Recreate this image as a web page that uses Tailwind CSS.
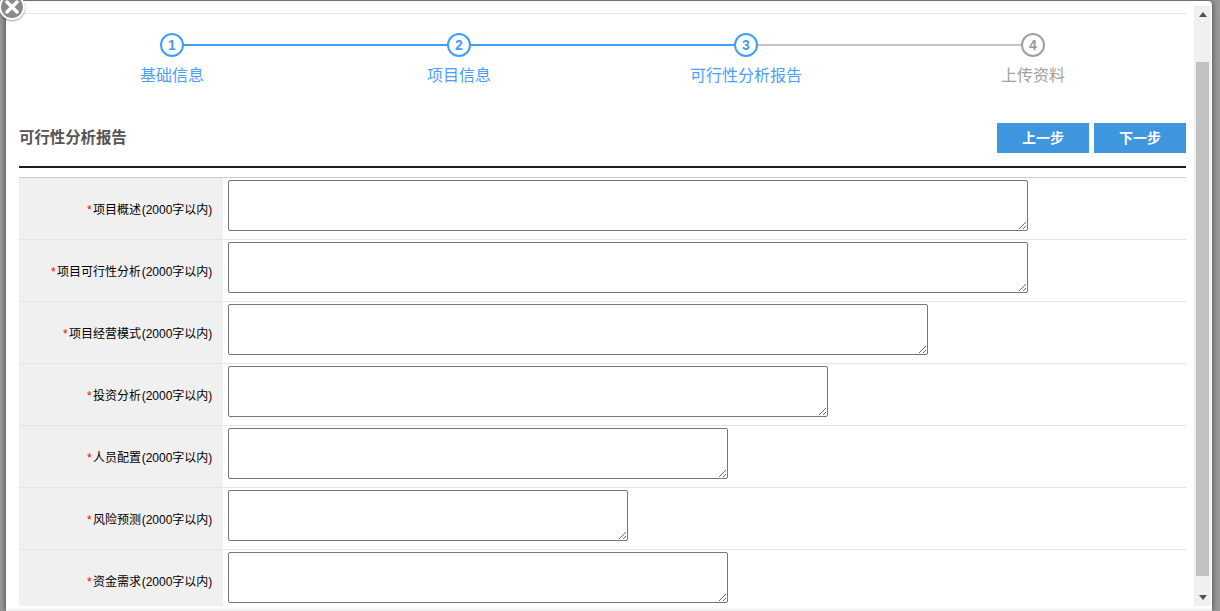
<!DOCTYPE html>
<html lang="zh-CN">
<head>
  <meta charset="UTF-8">
  <title>可行性分析报告</title>
  <script src="https://cdn.jsdelivr.net/npm/@tailwindcss/browser@4"></script>
</head>
<body class="relative h-[611px] w-[1220px] overflow-hidden bg-[#9a9a9a] font-['Liberation_Sans','Noto_Sans_CJK_SC',sans-serif]">
  <!-- close button -->
  <div class="absolute left-[-1px] top-[-6px] z-10 flex h-[26px] w-[26px] items-center justify-center rounded-full border-2 border-white bg-[#8a8a8a] shadow-[0_1px_2px_rgba(0,0,0,0.4)]">
    <svg width="16" height="16" viewBox="0 0 16 16"><path d="M3 3L13 13M13 3L3 13" stroke="#fff" stroke-width="3.5" stroke-linecap="round"/></svg>
  </div>

  <div class="ml-[6px] mt-px flex h-[610px] w-[1206px] rounded-t-[4px] bg-white pl-[13px] pt-[12px] shadow-[0_0_6px_rgba(0,0,0,0.6),inset_0_-3px_3px_-2px_rgba(0,0,0,0.12)]">
    <div class="w-[1167px]">
      <div class="h-[155px] border-t border-[#e5e5e5] border-b-2 border-b-[#141e28]">
        <!-- steps -->
        <div class="flex h-[99px] pl-[21px] pt-[19px]">
          <div class="w-[287px]">
            <div class="flex h-[24px] items-center">
              <div class="ml-[120px] flex h-[24px] w-[24px] shrink-0 items-center justify-center rounded-full border-2 border-[#3f9eff] text-[14px] font-bold text-[#3f9eff]">1</div>
              <div class="h-[2px] flex-1 bg-[#3f9eff]"></div>
            </div>
            <div class="ml-[100px] mt-[7px] text-[16px] leading-[24px] text-[#4b9eff]">基础信息</div>
          </div>
          <div class="w-[287px]">
            <div class="flex h-[24px] items-center">
              <div class="h-[2px] w-[120px] bg-[#3f9eff]"></div>
              <div class="flex h-[24px] w-[24px] shrink-0 items-center justify-center rounded-full border-2 border-[#3f9eff] text-[14px] font-bold text-[#3f9eff]">2</div>
              <div class="h-[2px] flex-1 bg-[#3f9eff]"></div>
            </div>
            <div class="ml-[100px] mt-[7px] text-[16px] leading-[24px] text-[#4b9eff]">项目信息</div>
          </div>
          <div class="w-[287px]">
            <div class="flex h-[24px] items-center">
              <div class="h-[2px] w-[120px] bg-[#3f9eff]"></div>
              <div class="flex h-[24px] w-[24px] shrink-0 items-center justify-center rounded-full border-2 border-[#3f9eff] text-[14px] font-bold text-[#3f9eff]">3</div>
              <div class="h-[2px] flex-1 bg-[#c0c4cc]"></div>
            </div>
            <div class="ml-[76px] mt-[7px] text-[16px] leading-[24px] text-[#4b9eff]">可行性分析报告</div>
          </div>
          <div class="w-[200px]">
            <div class="flex h-[24px] items-center">
              <div class="h-[2px] w-[120px] bg-[#c0c4cc]"></div>
              <div class="flex h-[24px] w-[24px] shrink-0 items-center justify-center rounded-full border-2 border-[#a0a0a0] text-[14px] font-bold text-[#999]">4</div>
            </div>
            <div class="ml-[100px] mt-[7px] text-[16px] leading-[24px] text-[#a0a0a0]">上传资料</div>
          </div>
        </div>
        <!-- title bar -->
        <div class="flex items-start justify-between pt-[10px]">
          <h2 class="text-[15.4px] font-bold leading-[29px] text-[#555]">可行性分析报告</h2>
          <div class="flex gap-[5px]">
            <button class="h-[30px] w-[92px] bg-[#3e96df] text-[14px] font-bold text-white">上一步</button>
            <button class="h-[30px] w-[92px] bg-[#3e96df] text-[14px] font-bold text-white">下一步</button>
          </div>
        </div>
      </div>

      <!-- form rows -->
      <div class="mt-[9px] border-t border-[#ccc]">
        <div class="flex h-[62px] border-b border-[#e5e5e5]">
          <label class="flex w-[204px] items-center justify-end bg-[#f0f0f0] pr-[10px] pt-[2px] text-[12px] text-black"><span class="w-[6px] text-[#f00]">*</span>项目概述<span class="w-[72px] text-center">(2000字以内)</span></label>
          <div class="pl-[5px] pt-[2px]"><textarea class="block h-[51px] w-[800px] rounded-[2px] border border-[#767676]"></textarea></div>
        </div>
        <div class="flex h-[62px] border-b border-[#e5e5e5]">
          <label class="flex w-[204px] items-center justify-end bg-[#f0f0f0] pr-[10px] pt-[2px] text-[12px] text-black"><span class="w-[6px] text-[#f00]">*</span>项目可行性分析<span class="w-[72px] text-center">(2000字以内)</span></label>
          <div class="pl-[5px] pt-[2px]"><textarea class="block h-[51px] w-[800px] rounded-[2px] border border-[#767676]"></textarea></div>
        </div>
        <div class="flex h-[62px] border-b border-[#e5e5e5]">
          <label class="flex w-[204px] items-center justify-end bg-[#f0f0f0] pr-[10px] pt-[2px] text-[12px] text-black"><span class="w-[6px] text-[#f00]">*</span>项目经营模式<span class="w-[72px] text-center">(2000字以内)</span></label>
          <div class="pl-[5px] pt-[2px]"><textarea class="block h-[51px] w-[700px] rounded-[2px] border border-[#767676]"></textarea></div>
        </div>
        <div class="flex h-[62px] border-b border-[#e5e5e5]">
          <label class="flex w-[204px] items-center justify-end bg-[#f0f0f0] pr-[10px] pt-[2px] text-[12px] text-black"><span class="w-[6px] text-[#f00]">*</span>投资分析<span class="w-[72px] text-center">(2000字以内)</span></label>
          <div class="pl-[5px] pt-[2px]"><textarea class="block h-[51px] w-[600px] rounded-[2px] border border-[#767676]"></textarea></div>
        </div>
        <div class="flex h-[62px] border-b border-[#e5e5e5]">
          <label class="flex w-[204px] items-center justify-end bg-[#f0f0f0] pr-[10px] pt-[2px] text-[12px] text-black"><span class="w-[6px] text-[#f00]">*</span>人员配置<span class="w-[72px] text-center">(2000字以内)</span></label>
          <div class="pl-[5px] pt-[2px]"><textarea class="block h-[51px] w-[500px] rounded-[2px] border border-[#767676]"></textarea></div>
        </div>
        <div class="flex h-[62px] border-b border-[#e5e5e5]">
          <label class="flex w-[204px] items-center justify-end bg-[#f0f0f0] pr-[10px] pt-[2px] text-[12px] text-black"><span class="w-[6px] text-[#f00]">*</span>风险预测<span class="w-[72px] text-center">(2000字以内)</span></label>
          <div class="pl-[5px] pt-[2px]"><textarea class="block h-[51px] w-[400px] rounded-[2px] border border-[#767676]"></textarea></div>
        </div>
        <div class="flex h-[56px]">
          <label class="flex w-[204px] items-center justify-end bg-[#f0f0f0] pr-[10px] pt-[7px] text-[12px] text-black"><span class="w-[6px] text-[#f00]">*</span>资金需求<span class="w-[72px] text-center">(2000字以内)</span></label>
          <div class="pl-[5px] pt-[2px]"><textarea class="block h-[51px] w-[500px] rounded-[2px] border border-[#767676]"></textarea></div>
        </div>
      </div>
    </div>

    <!-- scrollbar -->
    <div class="ml-[8px] -mt-[7px] flex h-[600px] w-[17px] flex-col items-center bg-[#f0f0f0]">
      <div class="flex h-[17px] items-center justify-center"><svg width="8" height="5" viewBox="0 0 8 5"><path d="M4 0L8 5H0Z" fill="#505050"/></svg></div>
      <div class="mt-[39px] h-[514px] w-[13px] bg-[#c1c1c1]"></div>
      <div class="mt-auto flex h-[17px] items-center justify-center"><svg width="8" height="5" viewBox="0 0 8 5"><path d="M0 0H8L4 5Z" fill="#505050"/></svg></div>
    </div>
  </div>
</body>
</html>
